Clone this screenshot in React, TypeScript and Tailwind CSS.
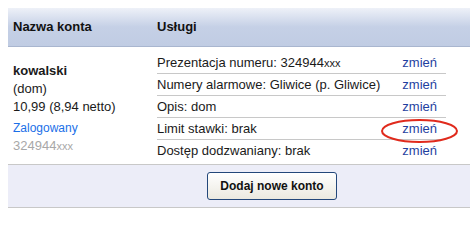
const rows: { label: string; suffix?: string }[] = [
  { label: "Prezentacja numeru: 324944", suffix: "xxx" },
  { label: "Numery alarmowe: Gliwice (p. Gliwice)" },
  { label: "Opis: dom" },
  { label: "Limit stawki: brak" },
  { label: "Dostęp dodzwaniany: brak" },
];

export default function App() {
  return (
    <div className="h-[219px] w-[470px] bg-white pl-2 pt-2 font-['Liberation_Sans',Arial,sans-serif] text-[13px] text-[#1a1a1a]">
      {/* header */}
      <div className="flex h-[39px] items-center border-b border-[#a9b6cf] bg-gradient-to-b from-[#eef1f8] via-[#c5d0e6] to-[#c0cce3] font-bold text-[#111]">
        <div className="w-[149px] pl-[5px]">Nazwa konta</div>
        <div>Usługi</div>
      </div>

      {/* body */}
      <div className="flex border-b border-[#c8c8c8] pb-[2px] pt-[5px]">
        <div className="flex w-[149px] flex-col justify-center pl-[5px] pt-[2px] leading-[18px]">
          <div className="font-bold">kowalski</div>
          <div>(dom)</div>
          <div>10,99 (8,94 netto)</div>
          <div className="mt-[3px] text-[12px] text-[#1a6fe8]">Zalogowany</div>
          <div className="text-[#a8a8a8]">
            324944<span className="text-[11px]">xxx</span>
          </div>
        </div>
        <div className="w-[289px]">
          {rows.map((r, i) => (
            <div
              key={r.label}
              className={`relative flex h-[22px] items-center ${
                i < rows.length - 1 ? "border-b border-[#c8c8c8]" : ""
              }`}
            >
              <span className="flex-1">
                {r.label}
                {r.suffix && <span className="text-[11px]">{r.suffix}</span>}
              </span>
              <a href="#" className="mr-[9px] text-[#1f3f9f]">
                zmień
              </a>
              {i === 3 && (
                <svg
                  className="absolute left-[224px] top-[1px] overflow-visible"
                  width="78"
                  height="24"
                  viewBox="0 0 78 24"
                >
                  <ellipse
                    cx="38.5"
                    cy="12"
                    rx="37.5"
                    ry="11"
                    fill="none"
                    stroke="#e02a1c"
                    strokeWidth="2"
                  />
                </svg>
              )}
            </div>
          ))}
        </div>
      </div>

      {/* footer */}
      <div className="flex h-[43px] items-center border-b border-[#c8c8c8] bg-[#ecedf8] pl-[199px]">
        <button className="h-[28px] w-[130px] rounded-[3px] border border-[#23477a] bg-gradient-to-b from-white to-[#ebe9e0] text-[12px] font-bold text-[#111]">
          Dodaj nowe konto
        </button>
      </div>
    </div>
  );
}
